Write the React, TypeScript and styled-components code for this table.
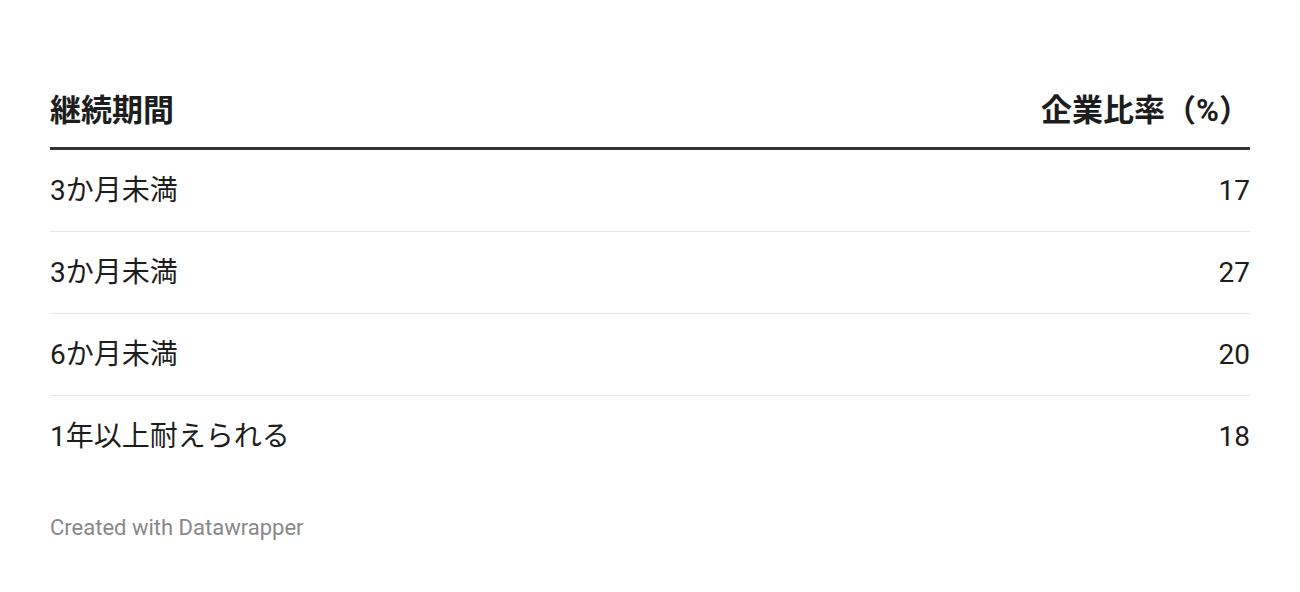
import React from "react";
import styled, { createGlobalStyle } from "styled-components";

const GlobalStyle = createGlobalStyle`
  body {
    margin: 0;
    background: #fff;
    font-family: Roboto, "Noto Sans CJK JP", sans-serif;
  }
`;

interface IRow {
  label: string;
  value: number;
}

const rows: IRow[] = [
  { label: "3か月未満", value: 17 },
  { label: "3か月未満", value: 27 },
  { label: "6か月未満", value: 20 },
  { label: "1年以上耐えられる", value: 18 },
];

export default function App() {
  return (
    <>
      <GlobalStyle />
      <Chart>
        <Table>
          <HeaderRow>
            <HeaderCell>継続期間</HeaderCell>
            <HeaderCell align="right">企業比率（%）</HeaderCell>
          </HeaderRow>
          {rows.map((row, index) => (
            <Row key={index} last={index === rows.length - 1}>
              <Cell>{row.label}</Cell>
              <Cell align="right">{row.value}</Cell>
            </Row>
          ))}
        </Table>
        <Footer>Created with Datawrapper</Footer>
      </Chart>
    </>
  );
}

const Chart = styled.div`
  padding: 93px 50px 0;
  display: flex;
  flex-direction: column;
`;

const Table = styled.div`
  display: flex;
  flex-direction: column;
`;

const HeaderRow = styled.div`
  display: flex;
  justify-content: space-between;
  padding-bottom: 18px;
  border-bottom: 3px solid #333;
`;

const HeaderCell = styled.div<{ align?: string }>`
  font-size: 31px;
  line-height: 36px;
  font-weight: 700;
  color: #1d1d1d;
  text-align: ${(p) => p.align || "left"};
`;

const Row = styled.div<{ last?: boolean }>`
  display: flex;
  justify-content: space-between;
  align-items: center;
  height: 81px;
  border-bottom: ${(p) => (p.last ? "none" : "1px solid #e6e6e6")};
`;

const Cell = styled.div<{ align?: string }>`
  font-size: 28px;
  line-height: 36px;
  color: #1d1d1d;
  text-align: ${(p) => p.align || "left"};
`;

const Footer = styled.div`
  margin-top: 39px;
  font-size: 22px;
  line-height: 24px;
  color: #888;
`;
